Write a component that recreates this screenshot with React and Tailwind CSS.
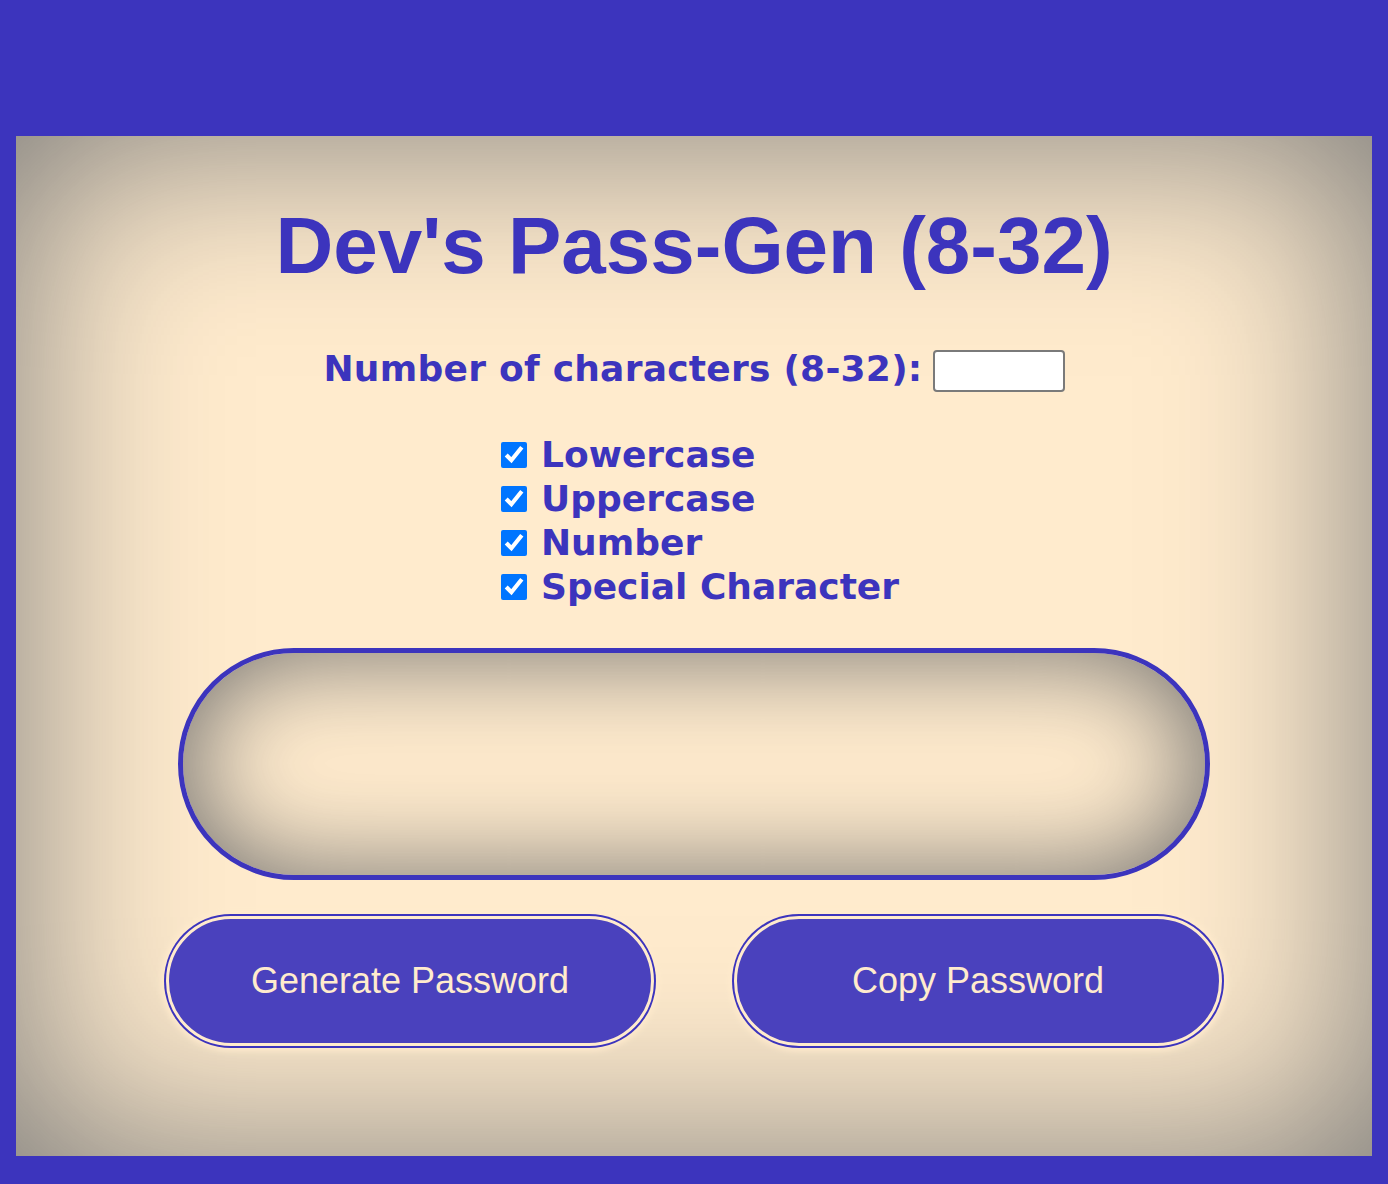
import { useState } from "react";

const options = ["Lowercase", "Uppercase", "Number", "Special Character"];

export default function App() {
  const [length, setLength] = useState("");
  const [password, setPassword] = useState("");
  const [checked, setChecked] = useState({
    Lowercase: true,
    Uppercase: true,
    Number: true,
    "Special Character": true,
  });

  const generate = () => {
    const sets = {
      Lowercase: "abcdefghijklmnopqrstuvwxyz",
      Uppercase: "ABCDEFGHIJKLMNOPQRSTUVWXYZ",
      Number: "0123456789",
      "Special Character": "!@#$%^&*()-_=+[]{};:,.<>?",
    };
    const pool = options.filter((o) => checked[o]).map((o) => sets[o]).join("");
    const n = parseInt(length, 10);
    if (!pool || isNaN(n) || n < 8 || n > 32) return;
    let out = "";
    for (let i = 0; i < n; i++) out += pool[Math.floor(Math.random() * pool.length)];
    setPassword(out);
  };

  const copy = () => {
    if (password) navigator.clipboard?.writeText(password);
  };

  return (
    <div className="min-h-[1184px] bg-[#3c34bd] px-[16px] pt-[136px] pb-[28px]">
      <div className="h-[1020px] bg-[#ffebcd] shadow-[inset_0_0_200px_#777] flex flex-col items-center pt-[64px]">
        {/* Title */}
        <h1 className="font-['Liberation_Sans',Arial,sans-serif] font-bold text-[80px] leading-[92px] text-[#3c34bd]">
          Dev's Pass-Gen (8-32)
        </h1>

        {/* Length input */}
        <div className="mt-[58px] flex items-center gap-[10px] h-[42px]">
          <label className="font-['DejaVu_Sans',Verdana,sans-serif] font-bold text-[36px] leading-[42px] tracking-[0.25px] text-[#3c34bd] -mt-[4px]">
            Number of characters (8-32):
          </label>
          <input
            type="text"
            value={length}
            onChange={(e) => setLength(e.target.value)}
            className="w-[132px] h-[42px] bg-white border-[2px] border-[#7a7a7a] rounded-[4px] px-2 text-[20px] outline-none"
          />
        </div>

        {/* Checkboxes */}
        <div className="mt-[41px] pl-[12px] flex flex-col">
          {options.map((opt) => (
            <label
              key={opt}
              className="h-[44px] flex items-center gap-[14px] font-['DejaVu_Sans',Verdana,sans-serif] font-bold text-[36px] text-[#3c34bd]"
            >
              <input
                type="checkbox"
                checked={checked[opt]}
                onChange={() => setChecked({ ...checked, [opt]: !checked[opt] })}
                className="w-[26px] h-[26px] m-0 accent-[#0075ff]"
              />
              <span>{opt}</span>
            </label>
          ))}
        </div>

        {/* Output */}
        <textarea
          readOnly
          value={password}
          className="mt-[39px] w-[1032px] h-[232px] rounded-full border-[5px] border-[#3c34bd] bg-[#ffebcd] shadow-[inset_0_0_110px_#6a6a6a] resize-none outline-none text-center px-16 pt-[90px] font-['Liberation_Sans',Arial,sans-serif] text-[32px] text-[#3c34bd]"
        />

        {/* Buttons */}
        <div className="mt-[36px] flex gap-[80px]">
          <button
            onClick={generate}
            className="w-[488px] h-[130px] rounded-full bg-[#4a41bd] border-[3px] border-[#ffebcd] shadow-[0_0_0_2px_#3c34bd,0_0_6px_5px_#ffebcd] font-['Liberation_Sans',Arial,sans-serif] text-[36px] text-[#ffebcd]"
          >
            Generate Password
          </button>
          <button
            onClick={copy}
            className="w-[488px] h-[130px] rounded-full bg-[#4a41bd] border-[3px] border-[#ffebcd] shadow-[0_0_0_2px_#3c34bd,0_0_6px_5px_#ffebcd] font-['Liberation_Sans',Arial,sans-serif] text-[36px] text-[#ffebcd]"
          >
            Copy Password
          </button>
        </div>
      </div>
    </div>
  );
}
